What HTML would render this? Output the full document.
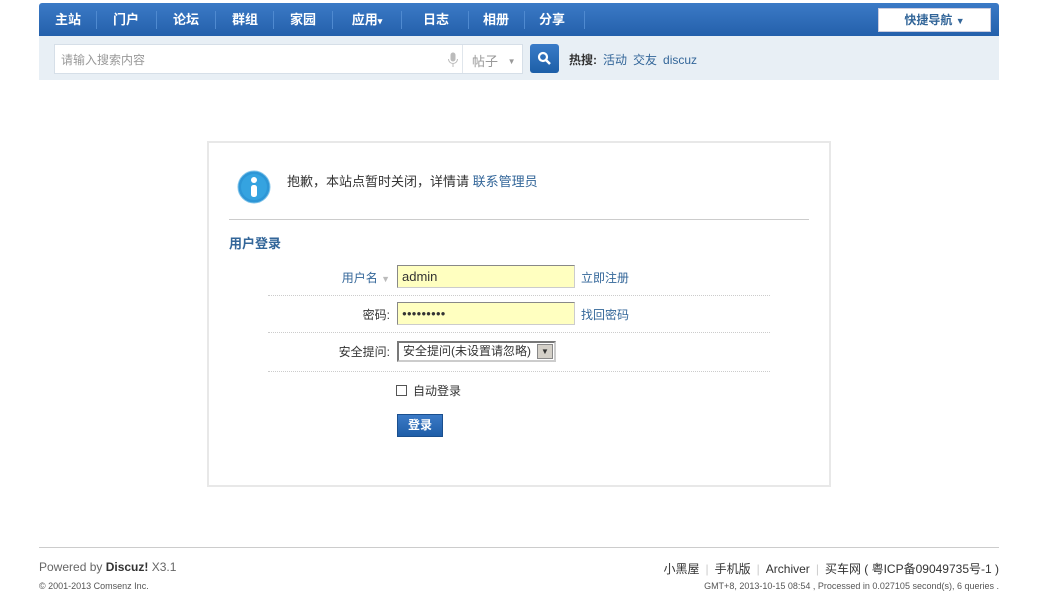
<!DOCTYPE html>
<html><head><meta charset="utf-8">
<style>
*{margin:0;padding:0;box-sizing:border-box}
body{width:1041px;height:610px;background:#fff;font:12px "Liberation Sans","Noto Sans CJK SC",sans-serif;color:#333;position:relative;overflow:hidden}
.a{position:absolute}
#nav{left:39px;top:3px;width:960px;height:33px;background:linear-gradient(#3b7ac6,#2460ab);border-radius:3px 3px 0 0}
#nav span{position:absolute;top:0;height:33px;line-height:33px;color:#fff;font-weight:bold;font-size:13px;text-align:center}
#nav i{position:absolute;top:8px;width:1px;height:18px;background:#4f8ad0}
#sub{left:39px;top:36px;width:960px;height:44px;background:#e8eff5}
.hot a{color:#336699;font-weight:normal;margin-left:6px}
.row{position:absolute;left:268px;width:502px;border-bottom:1px dotted #ccc}
.lbl{position:absolute;text-align:right;width:120px;left:270px;font-size:12px}
.inp{position:absolute;left:397px;width:178px;height:23px;background:#ffffc0;border:1px solid #999;border-color:#888 #ccc #ccc #888;padding-left:4px;line-height:21px;font-size:13px}
.lk{position:absolute;left:581px;color:#336699}
</style></head><body>
<div id="nav" class="a">
<span style="left:6px;width:46px">主站</span><i style="left:57px"></i>
<span style="left:64px;width:46px">门户</span><i style="left:117px"></i>
<span style="left:124px;width:46px">论坛</span><i style="left:176px"></i>
<span style="left:183px;width:46px">群组</span><i style="left:234px"></i>
<span style="left:241px;width:46px">家园</span><i style="left:293px"></i>
<span style="left:303px;width:50px">应用<small style="font-size:9px">▾</small></span><i style="left:362px"></i>
<span style="left:371px;width:52px">日志</span><i style="left:429px"></i>
<span style="left:434px;width:46px">相册</span><i style="left:485px"></i>
<span style="left:490px;width:46px">分享</span><i style="left:545px"></i>
<div class="a" style="left:839px;top:5px;width:113px;height:24px;background:#fff;border:1px solid #ccd;text-align:center;line-height:22px;color:#336699;font-weight:bold;font-size:12px">快捷导航 <span style="position:static;color:#336699;font-size:9px;line-height:22px">▼</span></div>
</div>
<div id="sub" class="a"></div>
<div class="a" style="left:54px;top:44px;width:469px;height:30px;background:#fff;border:1px solid #d6dfe8"></div>
<div class="a" style="left:61px;top:51px;color:#999;font-size:12px">请输入搜索内容</div>
<svg class="a" style="left:447px;top:52px" width="12" height="16"><rect x="3.5" y="0.5" width="5" height="9" rx="2.5" fill="#bbb"/><path d="M1.5 7a4.5 4.5 0 0 0 9 0M6 12v3" stroke="#bbb" fill="none"/></svg>
<div class="a" style="left:462px;top:45px;width:1px;height:28px;background:#e0e6ec"></div>
<div class="a" style="left:472px;top:51px;color:#999;font-size:13px">帖子 <span style="font-size:8px;margin-left:6px;vertical-align:2px">▼</span></div>
<div class="a" style="left:530px;top:44px;width:29px;height:29px;background:linear-gradient(#3a7bc8,#1d5fa7);border-radius:3px"></div>
<svg class="a" style="left:537px;top:51px" width="15" height="15"><circle cx="6" cy="6" r="4" stroke="#fff" stroke-width="2.2" fill="none"/><path d="M9 9l4 4" stroke="#fff" stroke-width="2.5"/></svg>
<div class="a hot" style="left:569px;top:51px;font-weight:bold;color:#333">热搜:<a>活动</a><a>交友</a><a>discuz</a></div>

<div class="a" style="left:207px;top:141px;width:624px;height:346px;border:2px solid #e8e8e8"></div>
<svg class="a" style="left:237px;top:170px" width="34" height="34"><circle cx="17" cy="17" r="16" fill="#2d96d6" stroke="#7fc3ea" stroke-width="1"/><circle cx="17" cy="17" r="13" fill="#35a3e0"/><circle cx="17" cy="10" r="3" fill="#fff"/><rect x="14" y="15" width="6" height="12" rx="2.5" fill="#fff"/></svg>
<div class="a" style="left:287px;top:171px;font-size:13px;color:#333">抱歉，本站点暂时关闭，详情请 <span style="color:#336699">联系管理员</span></div>
<div class="a" style="left:229px;top:219px;width:580px;height:1px;background:#ccc"></div>
<div class="a" style="left:229px;top:233px;font-weight:bold;font-size:13px;color:#336699">用户登录</div>

<div class="lbl" style="top:269px;color:#336699">用户名 <span style="color:#bbb;font-size:9px">▼</span></div>
<div class="inp" style="top:265px">admin</div>
<div class="lk" style="top:269px">立即注册</div>
<div class="row" style="top:295px"></div>
<div class="lbl" style="top:306px">密码:</div>
<div class="inp" style="top:302px;font-size:8px;letter-spacing:0">●●●●●●●●●</div>
<div class="lk" style="top:306px">找回密码</div>
<div class="row" style="top:332px"></div>
<div class="lbl" style="top:343px">安全提问:</div>
<div class="a" style="left:397px;top:341px;width:159px;height:21px;border:2px inset #ccc;background:#fff;padding-left:4px;line-height:17px;font-size:12px">安全提问(未设置请忽略)</div>
<div class="a" style="left:537px;top:344px;width:16px;height:15px;background:#d4d0c8;border:1px solid #888;font-size:8px;text-align:center;line-height:13px">▼</div>
<div class="row" style="top:371px"></div>
<div class="a" style="left:396px;top:385px;width:11px;height:11px;border:1px solid #555;background:#fff"></div>
<div class="a" style="left:413px;top:382px;font-size:12px">自动登录</div>
<div class="a" style="left:397px;top:414px;width:46px;height:23px;background:linear-gradient(#3b7ac6,#1f5ea8);border:1px solid #1a4f8e;color:#fff;font-weight:bold;text-align:center;line-height:21px;font-size:12px">登录</div>

<div class="a" style="left:39px;top:547px;width:960px;height:1px;background:#ccc"></div>
<div class="a" style="left:39px;top:560px;font-size:12px;color:#666">Powered by <b style="color:#333">Discuz!</b> X3.1</div>
<div class="a" style="left:39px;top:581px;font-size:9px;color:#555">© 2001-2013 Comsenz Inc.</div>
<div class="a" style="right:42px;top:560px;font-size:12px;color:#333">小黑屋<span style="color:#ccc;margin:0 6px">|</span>手机版<span style="color:#ccc;margin:0 6px">|</span>Archiver<span style="color:#ccc;margin:0 6px">|</span>买车网 ( 粤ICP备09049735号-1 )</div>
<div class="a" style="right:42px;top:581px;font-size:9px;color:#555">GMT+8, 2013-10-15 08:54 , Processed in 0.027105 second(s), 6 queries .</div>
</body></html>
